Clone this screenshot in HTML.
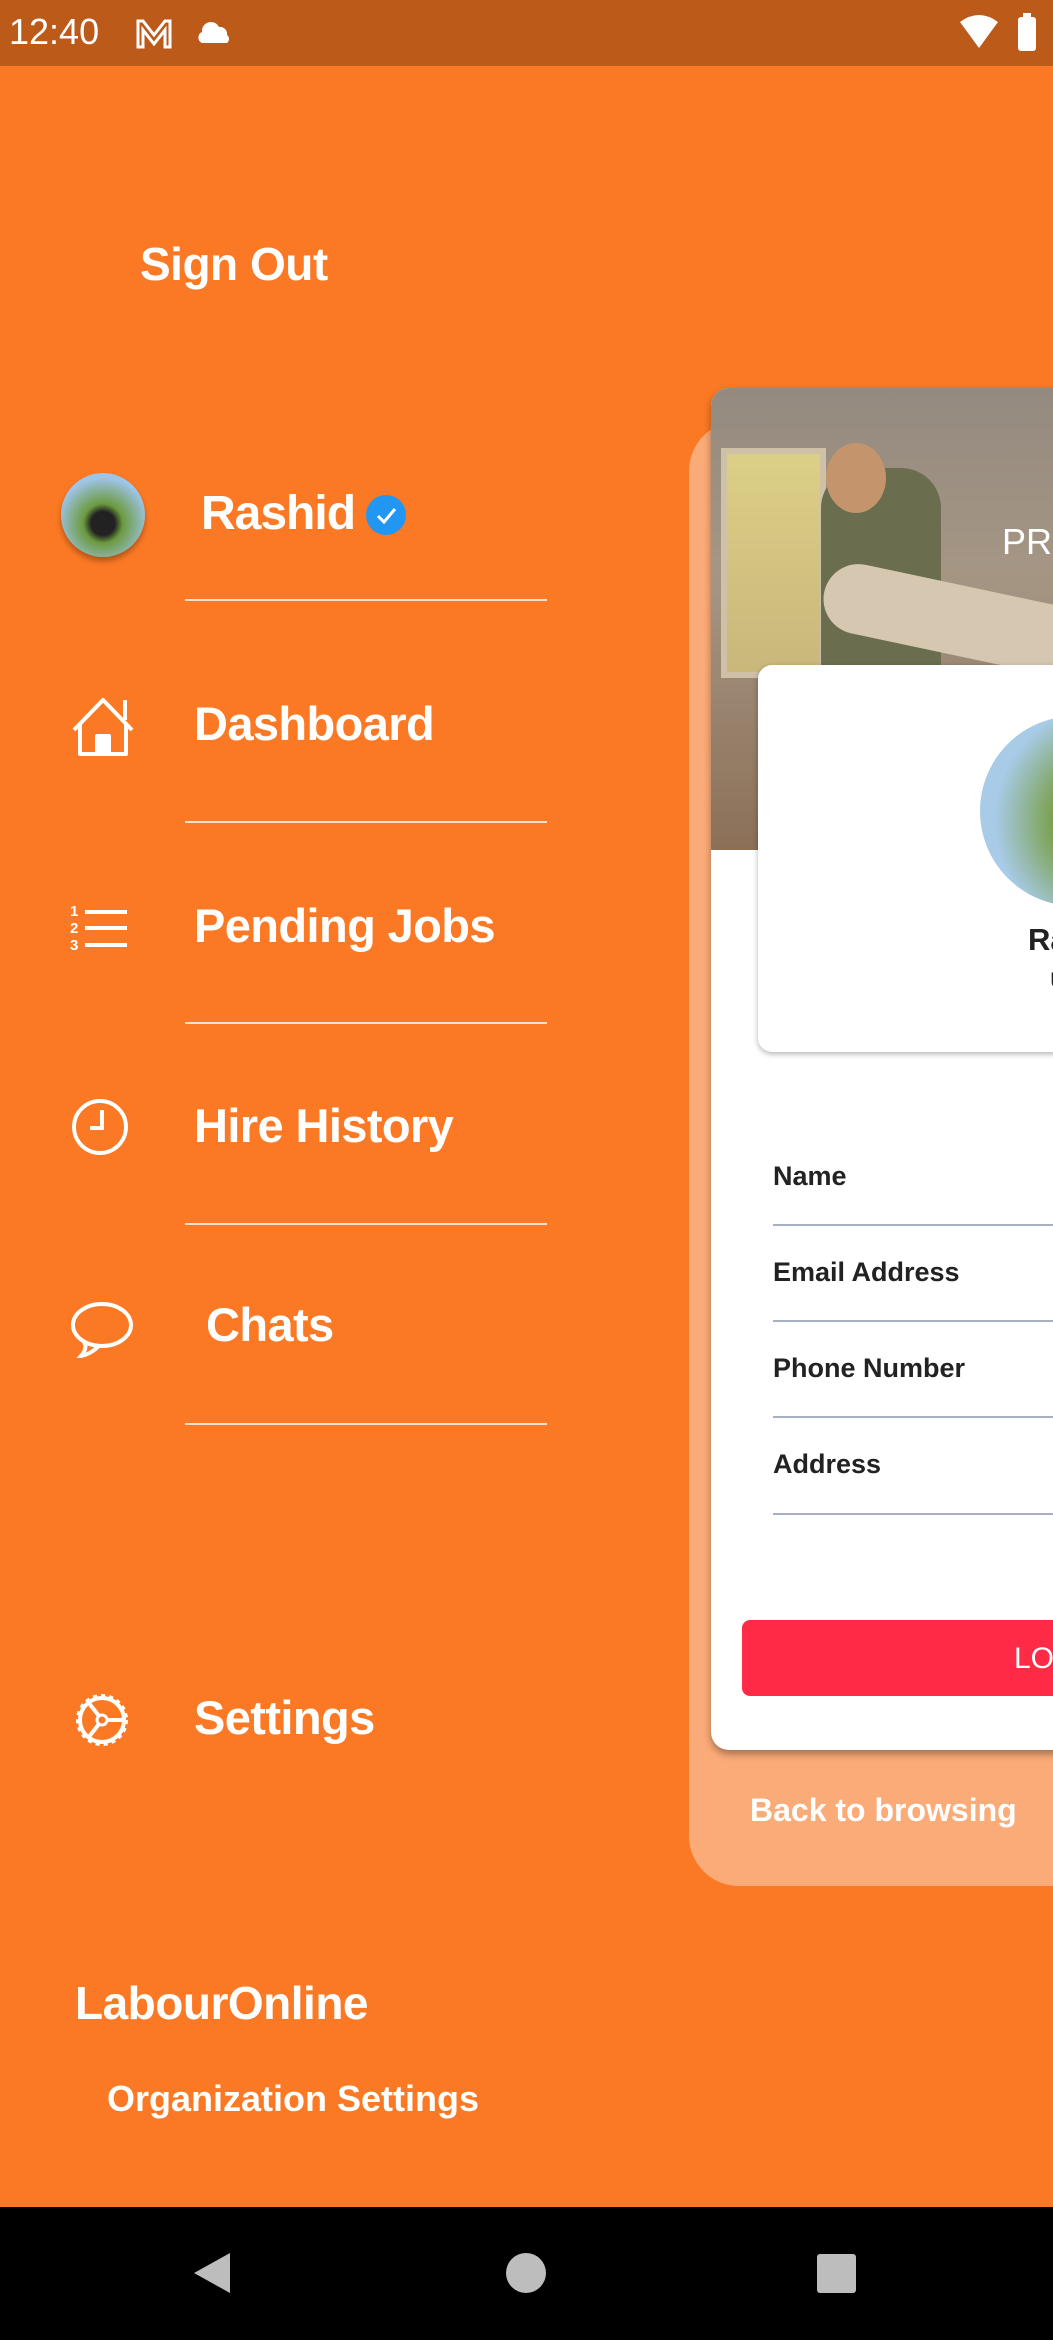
<!DOCTYPE html>
<html><head><meta charset="utf-8"><style>
*{margin:0;padding:0;box-sizing:border-box}
body{width:1053px;height:2340px;background:#fb7924;position:relative;overflow:hidden;font-family:"Liberation Sans",Arial,sans-serif;color:#fff}
.a{position:absolute}
.t{font-weight:bold;line-height:1;white-space:nowrap}
.n{font-size:47px;letter-spacing:-0.6px}
.ln{position:absolute;left:185px;width:362px;height:2px;background:#fde0cc}
.f{position:absolute;left:773px;font-weight:bold;font-size:27px;color:#222;line-height:1}
.fl{position:absolute;left:773px;width:300px;height:2px;background:#a6afc4}
</style></head><body>
<div class="a" style="left:0;top:0;width:1053px;height:66px;background:#bc5a1a"></div>
<div class="a" style="left:9px;top:14px;font-size:36px;line-height:1">12:40</div>
<svg class="a" style="left:134px;top:17px" width="40" height="32" viewBox="0 0 40 32"><path d="M4 30V4h5l11 14L31 4h5v26h-5V13L20 27 9 13v17z" fill="none" stroke="#fff" stroke-width="3"/></svg>
<svg class="a" style="left:196px;top:20px" width="38" height="24" viewBox="0 0 38 24"><path d="M6 23a6 6 0 0 1 0-11a9 9 0 0 1 17-5a7 7 0 0 1 8 8a5 5 0 0 1 0 8z" fill="#fff"/></svg>
<svg class="a" style="left:958px;top:14px" width="42" height="36" viewBox="0 0 42 36"><path d="M2 8Q21-6 40 8L21 34z" fill="#fff"/></svg>
<div class="a" style="left:1018px;top:17px;width:18px;height:34px;background:#fff;border-radius:3px"></div>
<div class="a" style="left:1023px;top:13px;width:8px;height:5px;background:#fff"></div>

<div class="a t" style="left:140px;top:241px;font-size:46px;letter-spacing:-0.5px">Sign Out</div>

<div class="a" style="left:61px;top:473px;width:84px;height:84px;border-radius:50%;background:radial-gradient(circle at 50% 60%,#222 0 18%,#6c9a3e 30%,#9ec4e8 70%);box-shadow:0 4px 6px rgba(0,0,0,.3)"></div>
<div class="a t n" style="left:201px;top:490px;font-size:48px;letter-spacing:-1px">Rashid</div>
<div class="a" style="left:366px;top:495px;width:40px;height:40px;border-radius:50%;background:#2196f3"></div>
<svg class="a" style="left:366px;top:495px" width="40" height="40"><path d="M12 21l6 6 11-13" fill="none" stroke="#fff" stroke-width="3"/></svg>
<div class="ln" style="top:599px"></div>

<svg class="a" style="left:70px;top:696px" width="66" height="62" viewBox="0 0 66 62"><path d="M4 34L33 4l29 30M55 24V4M10 28v30h46V28M27 58V40h12v18" fill="none" stroke="#fff" stroke-width="4" stroke-linejoin="round"/><rect x="27" y="40" width="12" height="18" fill="#fff"/></svg>
<div class="a t n" style="left:194px;top:700px">Dashboard</div>
<div class="ln" style="top:821px"></div>

<div class="a" style="left:70px;top:903px;font-size:15px;line-height:17px;font-weight:bold">1<br>2<br>3</div>
<div class="a" style="left:85px;top:910px;width:42px;height:4px;background:#fff"></div>
<div class="a" style="left:85px;top:926px;width:42px;height:4px;background:#fff"></div>
<div class="a" style="left:85px;top:943px;width:42px;height:4px;background:#fff"></div>
<div class="a t n" style="left:194px;top:902px">Pending Jobs</div>
<div class="ln" style="top:1022px"></div>

<svg class="a" style="left:70px;top:1097px" width="60" height="60"><circle cx="30" cy="30" r="26" fill="none" stroke="#fff" stroke-width="4"/><path d="M32 13v18H20" fill="none" stroke="#fff" stroke-width="4"/></svg>
<div class="a t n" style="left:194px;top:1102px">Hire History</div>
<div class="ln" style="top:1223px"></div>

<svg class="a" style="left:70px;top:1300px" width="64" height="58"><ellipse cx="32" cy="25" rx="29" ry="21" fill="none" stroke="#fff" stroke-width="4"/><path d="M14 42q4 6 -3 14q10-2 18-10" fill="none" stroke="#fff" stroke-width="4"/></svg>
<div class="a t n" style="left:206px;top:1301px">Chats</div>
<div class="ln" style="top:1423px"></div>

<svg class="a" style="left:70px;top:1688px" width="64" height="64" viewBox="0 0 64 64"><circle cx="32" cy="32" r="24" fill="none" stroke="#fff" stroke-width="4" stroke-dasharray="4 4"/><circle cx="32" cy="32" r="22" fill="none" stroke="#fff" stroke-width="4"/><circle cx="32" cy="32" r="5" fill="none" stroke="#fff" stroke-width="3"/><path d="M37 32h17M29 28L18 14M29 36L18 50" stroke="#fff" stroke-width="4"/></svg>
<div class="a t n" style="left:194px;top:1694px">Settings</div>

<div class="a t" style="left:75px;top:1980px;font-size:46px;letter-spacing:-0.5px">LabourOnline</div>
<div class="a t" style="left:107px;top:2081px;font-size:36px">Organization Settings</div>

<!-- right panel -->
<div class="a" style="left:689px;top:421px;width:420px;height:1465px;background:#fbab78;border-radius:50px"></div>
<div class="a" style="left:711px;top:388px;width:400px;height:1362px;background:#fff;border-radius:18px;box-shadow:0 4px 8px rgba(0,0,0,.35);overflow:hidden">
 <div class="a" style="left:0;top:0;width:400px;height:462px;background:linear-gradient(180deg,#948a80 0%,#a59684 40%,#8c7058 100%)"></div>
 <div class="a" style="left:10px;top:60px;width:105px;height:230px;background:linear-gradient(#dccf86,#c9b77b);border:6px solid #cfc0a8"></div>
 <div class="a" style="left:110px;top:80px;width:120px;height:200px;background:#6a6e4e;border-radius:40px 40px 0 0"></div>
 <div class="a" style="left:115px;top:55px;width:60px;height:70px;background:#c4946c;border-radius:50%"></div>
 <div class="a" style="left:110px;top:200px;width:300px;height:70px;background:#d6c7b0;border-radius:35px;transform:rotate(12deg)"></div>
 <div class="a" style="left:291px;top:136px;font-size:36px;line-height:1;color:#fff">PR</div>
</div>
<div class="a" style="left:758px;top:665px;width:320px;height:387px;background:#fff;border-radius:14px;box-shadow:0 2px 6px rgba(0,0,0,.3)"></div>
<div class="a" style="left:980px;top:716px;width:190px;height:190px;border-radius:50%;background:radial-gradient(circle at 70% 55%,#1e2230 0 20%,#7aa04c 35%,#a8cbe8 70%)"></div>
<div class="a t" style="left:1028px;top:924px;font-size:31px;color:#222">Ra</div>
<div class="a" style="left:1050px;top:968px;font-size:22px;color:#222">U</div>

<div class="f" style="top:1163px">Name</div><div class="fl" style="top:1224px"></div>
<div class="f" style="top:1259px">Email Address</div><div class="fl" style="top:1320px"></div>
<div class="f" style="top:1355px">Phone Number</div><div class="fl" style="top:1416px"></div>
<div class="f" style="top:1451px">Address</div><div class="fl" style="top:1513px"></div>

<div class="a" style="left:742px;top:1620px;width:330px;height:76px;background:#ff2a45;border-radius:8px"></div>
<div class="a" style="left:1014px;top:1644px;font-size:30px;line-height:1;color:#fff">LO</div>
<div class="a t" style="left:750px;top:1794px;font-size:32px">Back to browsing</div>

<div class="a" style="left:0;top:2207px;width:1053px;height:133px;background:#000"></div>
<svg class="a" style="left:190px;top:2251px" width="44" height="44"><path d="M40 2v40L4 22z" fill="#bdbdbd"/></svg>
<div class="a" style="left:506px;top:2253px;width:40px;height:40px;border-radius:50%;background:#bdbdbd"></div>
<div class="a" style="left:817px;top:2254px;width:39px;height:39px;border-radius:3px;background:#bdbdbd"></div>
</body></html>
